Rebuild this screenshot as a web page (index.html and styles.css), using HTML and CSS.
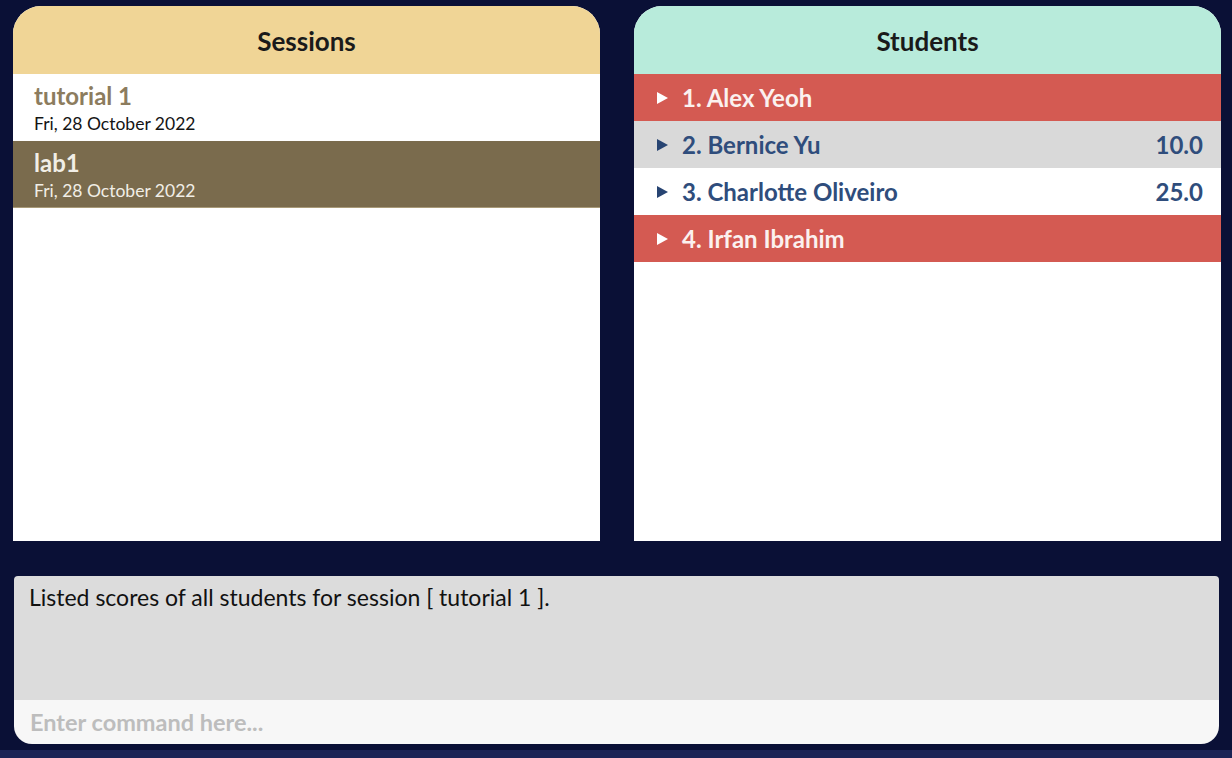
FILE: index.html
```html
<!DOCTYPE html>
<html>
<head>
<meta charset="utf-8">
<link rel="stylesheet" href="styles.css">
</head>
<body>
<div class="app">
  <div class="panels">
    <section class="panel">
      <div class="panel-head sessions-head">Sessions</div>
      <div class="panel-body">
        <div class="session">
          <div class="s-title">tutorial 1</div>
          <div class="s-date">Fri, 28 October 2022</div>
        </div>
        <div class="session selected">
          <div class="s-title">lab1</div>
          <div class="s-date">Fri, 28 October 2022</div>
        </div>
      </div>
    </section>
    <section class="panel">
      <div class="panel-head students-head">Students</div>
      <div class="panel-body">
        <div class="student red"><span class="tri"></span><span class="name">1. Alex Yeoh</span><span class="score"></span></div>
        <div class="student grey"><span class="tri"></span><span class="name">2. Bernice Yu</span><span class="score">10.0</span></div>
        <div class="student white"><span class="tri"></span><span class="name">3. Charlotte Oliveiro</span><span class="score">25.0</span></div>
        <div class="student red"><span class="tri"></span><span class="name">4. Irfan Ibrahim</span><span class="score"></span></div>
      </div>
    </section>
  </div>
  <div class="command">
    <div class="result">Listed scores of all students for session [ tutorial 1 ].</div>
    <div class="input">Enter command here...</div>
  </div>
</div>
<div class="strip"></div>
</body>
</html>
```
FILE: styles.css
```css
html, body {
  margin: 0;
  padding: 0;
}
body {
  background: #0a1036;
  font-family: "Lato", "Noto Sans", sans-serif;
  width: 1232px;
  height: 758px;
  overflow: hidden;
  display: flex;
  flex-direction: column;
}
.app {
  height: 750px;
  box-sizing: border-box;
  padding: 6px 11px 0 13px;
  display: flex;
  flex-direction: column;
}
.panels {
  display: grid;
  grid-template-columns: 587px 587px;
  column-gap: 34px;
  height: 535px;
}
.panel {
  background: #ffffff;
  border-radius: 28px 28px 0 0;
  overflow: hidden;
  display: flex;
  flex-direction: column;
}
.panel-head {
  height: 68px;
  flex: none;
  display: flex;
  align-items: center;
  justify-content: center;
  font-weight: 700;
  font-size: 26px;
  color: #1a1a1a;
  padding-top: 1px;
  box-sizing: border-box;
}
.sessions-head { background: #f0d596; }
.students-head { background: #b8ebdb; }
.panel-body {
  flex: 1;
  background: #ffffff;
}
.session {
  height: 67px;
  box-sizing: border-box;
  padding: 8px 0 0 21px;
  border-bottom: 1px solid #ffffff;
}
.s-title {
  font-size: 24px;
  font-weight: 700;
  color: #8c7c5e;
  line-height: 28px;
}
.s-date {
  font-size: 17.5px;
  color: #141414;
  line-height: 22px;
  margin-top: 3px;
}
.session.selected {
  background: #7a6b4d;
  border-bottom: 1px solid #a99a78;
}
.session.selected .s-title { color: #f1eee6; }
.session.selected .s-date { color: #f1eee6; }
.student {
  height: 47px;
  box-sizing: border-box;
  display: flex;
  align-items: center;
  padding: 0 18px 0 23px;
  font-size: 24px;
  font-weight: 700;
  color: #2f4d7c;
}
.student.red {
  background: #d45a52;
  color: #fbf1ef;
}
.student.grey { background: #d9d9d9; }
.student.white { background: #ffffff; }
.tri {
  width: 0;
  height: 0;
  border-top: 6px solid transparent;
  border-bottom: 6px solid transparent;
  border-left: 11px solid #274472;
  margin-right: 14px;
  flex: none;
}
.student.red .tri { border-left-color: #ffffff; }
.name { flex: 1; }
.score { text-align: right; }
.command {
  margin-top: 35px;
  margin-left: 1px;
  width: 1205px;
  border-radius: 4px 4px 18px 18px;
  overflow: hidden;
  display: flex;
  flex-direction: column;
}
.result {
  height: 124px;
  background: #dcdcdc;
  box-sizing: border-box;
  padding: 7px 0 0 15px;
  font-size: 23px;
  color: #111111;
}
.input {
  height: 44px;
  background: #f7f7f7;
  box-sizing: border-box;
  padding: 8px 0 0 16px;
  font-size: 23.5px;
  font-weight: 700;
  color: #bdbdbd;
}
.strip {
  height: 8px;
  background: #1b2455;
}
```
